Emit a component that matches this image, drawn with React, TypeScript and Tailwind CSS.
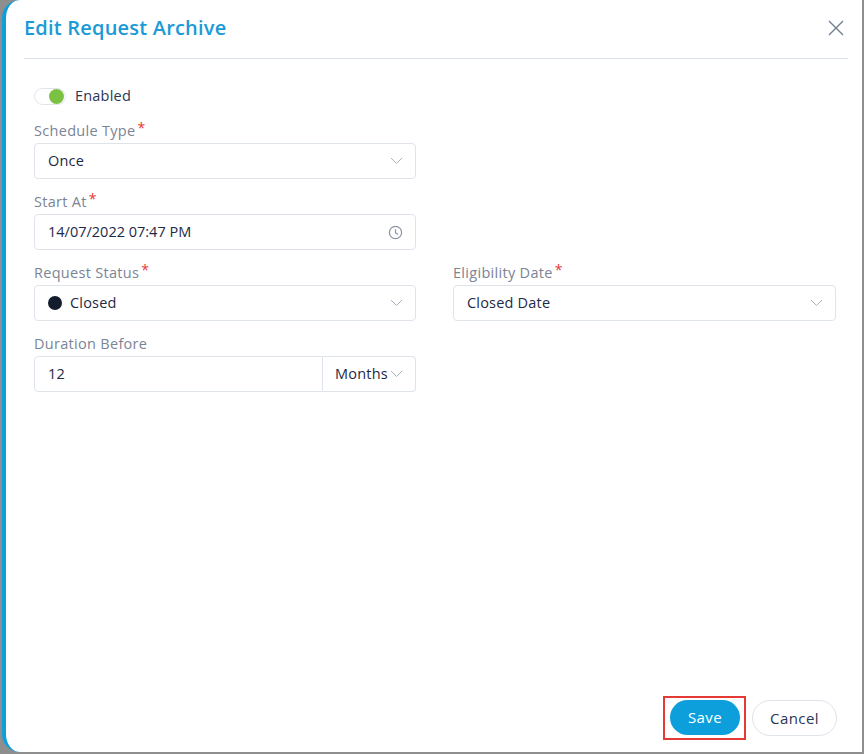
import React from 'react';

const Chevron = () => (
  <svg width="13" height="8" viewBox="0 0 13 8" fill="none" className="shrink-0">
    <polyline points="1,1 6.5,6.5 12,1" stroke="#a9b1c0" strokeWidth="1" />
  </svg>
);

const Clock = () => (
  <svg width="15" height="15" viewBox="0 0 16 16" fill="none">
    <circle cx="8" cy="8" r="6.5" stroke="#8c95a5" strokeWidth="1.3" />
    <polyline points="8,4.5 8,8.3 10.5,10" stroke="#8c95a5" strokeWidth="1.3" fill="none" />
  </svg>
);

const Label = ({ text, required }: { text: string; required?: boolean }) => (
  <div className="h-[23px] leading-[22px] text-[14.5px] tracking-[0.3px] text-[#7b8494] flex items-start">
    <span>{text}</span>
    {required && <span className="text-[#e53935] text-[14px] leading-[16px] ml-[2px]">*</span>}
  </div>
);

const Select = ({ children }: { children: React.ReactNode }) => (
  <div className="h-[36px] border border-[#dfe3ea] rounded-[4px] flex items-center justify-between pl-[13px] pr-[12px] text-[14.5px] tracking-[0.2px] text-[#1e2a46]">
    <div className="flex items-center">{children}</div>
    <Chevron />
  </div>
);

export default function App() {
  return (
    <div
      className="w-[864px] h-[754px] bg-[#8e8e8e] pl-[2px] pb-[2px] pr-[2px] flex"
      style={{ fontFamily: '"Open Sans", "Liberation Sans", sans-serif' }}
    >
      <div className="flex-1 bg-white rounded-l-[18px] border-l-4 border-[#0c9fdb] flex flex-col">
        {/* Header */}
        <div className="h-[59px] pl-[18px] pr-[14px] flex items-center">
          <div className="flex-1 h-full flex items-center justify-between border-b border-[#dde3ee]">
            <h1 className="text-[20px] font-semibold text-[#1a9ad6] tracking-[0.2px] pb-[2px]">Edit Request Archive</h1>
            <svg width="16" height="16" viewBox="0 0 16 16" className="mr-[4px] mb-[2px]">
              <path d="M1 1 L15 15 M15 1 L1 15" stroke="#6e7d91" strokeWidth="1.4" />
            </svg>
          </div>
        </div>

        {/* Body */}
        <div className="flex-1 flex flex-col pl-[28px] pr-[25px] pt-[27px]">
          <div className="h-[20px] flex items-center gap-[9px]">
            <div className="w-[32px] h-[17px] rounded-full border border-[#e1e5eb] bg-white relative">
              <div className="absolute right-[1px] top-[0px] w-[15px] h-[15px] rounded-full bg-[#7cc242]" />
            </div>
            <span className="text-[14.5px] tracking-[0.2px] text-[#2b3654]">Enabled</span>
          </div>

          <div className="mt-[14px] w-[382px]">
            <Label text="Schedule Type" required />
            <Select>Once</Select>
          </div>

          <div className="mt-[12px] w-[382px]">
            <Label text="Start At" required />
            <div className="h-[36px] border border-[#dfe3ea] rounded-[4px] flex items-center justify-between pl-[13px] pr-[12px] text-[14.5px] text-[#1e2a46]">
              <span>14/07/2022 07:47 PM</span>
              <Clock />
            </div>
          </div>

          <div className="mt-[12px] grid grid-cols-[382px_383px] gap-x-[37px]">
            <div>
              <Label text="Request Status" required />
              <Select>
                <span className="w-[14px] h-[14px] rounded-full bg-[#131c2c] mr-[8px]" />
                Closed
              </Select>
            </div>
            <div>
              <Label text="Eligibility Date" required />
              <Select>Closed Date</Select>
            </div>
          </div>

          <div className="mt-[12px] w-[382px]">
            <Label text="Duration Before" />
            <div className="h-[36px] flex text-[14.5px] tracking-[0.2px] text-[#1e2a46]">
              <div className="flex-1 border border-[#dfe3ea] rounded-l-[4px] flex items-center pl-[13px]">12</div>
              <div className="w-[93px] border border-l-0 border-[#dfe3ea] rounded-r-[4px] flex items-center justify-between pl-[12px] pr-[12px]">
                <span>Months</span>
                <Chevron />
              </div>
            </div>
          </div>

          <div className="mt-auto mb-[12px] flex justify-end items-center">
            <div className="border-2 border-[#e53935] pt-[2px] pb-[3px] pl-[5px] pr-[4px]">
              <button className="block w-[70px] h-[35px] rounded-full bg-[#0c9fdb] text-white text-[15px] tracking-[0.4px] font-medium">
                Save
              </button>
            </div>
            <button className="w-[85px] h-[36px] rounded-full border border-[#dfe3ea] text-[#2b3654] text-[15px] tracking-[0.4px] ml-[6px]">
              Cancel
            </button>
          </div>
        </div>
      </div>
    </div>
  );
}
